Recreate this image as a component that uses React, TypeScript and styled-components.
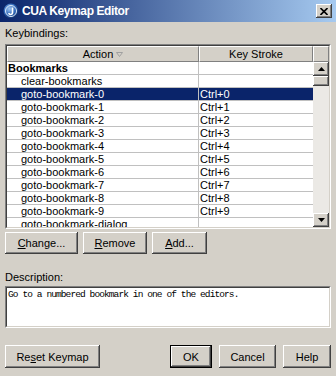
import styled, { createGlobalStyle, css } from 'styled-components';

const GlobalStyle = createGlobalStyle`
    html, body { margin: 0; padding: 0; background: #d4d0c8; }
    * { box-sizing: border-box; }
`;

const raised = css`
    background: #d4d0c8;
    box-shadow: inset -1px -1px #404040, inset 1px 1px #ffffff, inset -2px -2px #808080, inset 2px 2px #d4d0c8;
`;

const Window = styled.div`
    width: 336px;
    height: 376px;
    background: #d4d0c8;
    display: flex;
    flex-direction: column;
    overflow: hidden;
    font-family: "Liberation Sans", Arial, sans-serif;
    font-size: 11px;
    color: #000;
`;

const TitleBar = styled.div`
    height: 22px;
    flex-shrink: 0;
    display: flex;
    align-items: center;
    gap: 3px;
    padding-left: 3px;
    background: linear-gradient(to right, #0a246a, #a6caf0);
    color: #fff;
    font-weight: bold;
    font-size: 12px;
    letter-spacing: -0.4px;
`;

const CloseButton = styled.div`
    ${raised};
    margin-left: auto;
    margin-right: 4px;
    width: 16px;
    height: 14px;
    display: flex;
    align-items: center;
    justify-content: center;
`;

const Content = styled.div`
    display: flex;
    flex-direction: column;
    padding: 0 5px;
`;

const Label = styled.div<{ $mt: number }>`
    height: 16px;
    line-height: 16px;
    margin-top: ${p => p.$mt}px;
`;

const TableFrame = styled.div`
    margin-top: 3px;
    height: 185px;
    border: 1px solid;
    border-color: #808080 #ffffff #ffffff #808080;
`;

const TableInner = styled.div`
    height: 100%;
    border: 1px solid;
    border-color: #404040 #d4d0c8 #d4d0c8 #404040;
    display: grid;
    grid-template-columns: 1fr 16px;
    grid-template-rows: 16px 1fr;
    overflow: hidden;
`;

const Header = styled.div`
    display: grid;
    grid-template-columns: 192px 1fr;
`;

const HeaderCell = styled.div`
    background: #d4d0c8;
    border-top: 1px solid #fff;
    border-left: 1px solid #fff;
    border-right: 1px solid #808080;
    border-bottom: 1px solid #808080;
    display: flex;
    align-items: center;
    justify-content: center;
    gap: 3px;
    line-height: 14px;
`;

const Body = styled.div`
    background: #fff;
    overflow: hidden;
    min-height: 0;
`;

const Row = styled.div<{ $selected?: boolean }>`
    display: grid;
    grid-template-columns: 192px 1fr;
    height: 13px;
    background: ${p => (p.$selected ? '#0a246a' : '#fff')};
    color: ${p => (p.$selected ? '#fff' : '#000')};
`;

const Cell = styled.div<{ $indent: number; $bold?: boolean; $divider?: boolean }>`
    padding-left: ${p => p.$indent}px;
    line-height: 12px;
    white-space: nowrap;
    overflow: hidden;
    font-weight: ${p => (p.$bold ? 'bold' : 'normal')};
    border-bottom: 1px solid #c0c0c0;
    border-right: ${p => (p.$divider ? '1px solid #c0c0c0' : 'none')};
`;

const ScrollBar = styled.div`
    display: flex;
    flex-direction: column;
    background: #ebe9e5;
    min-height: 0;
`;

const ScrollButton = styled.div`
    ${raised};
    height: 14px;
    flex-shrink: 0;
    display: flex;
    align-items: center;
    justify-content: center;
`;

const Thumb = styled.div`
    ${raised};
    height: 10px;
    flex-shrink: 0;
`;

const Track = styled.div`
    flex: 1;
`;

const ButtonRow = styled.div<{ $mt: number; $h: number }>`
    display: flex;
    gap: 5px;
    margin-top: ${p => p.$mt}px;
    height: ${p => p.$h}px;
`;

const Spacer = styled.div`
    flex: 1;
`;

const Group = styled.div`
    display: flex;
    gap: 7px;
`;

const Button = styled.button<{ $w: number; $default?: boolean }>`
    ${raised};
    width: ${p => p.$w}px;
    height: 100%;
    padding: 0;
    border: ${p => (p.$default ? '1px solid #000' : 'none')};
    font-family: "Liberation Sans", Arial, sans-serif;
    font-size: 11px;
    color: #000;
    u { text-decoration-thickness: 1px; text-underline-offset: 1px; }
`;

const TextArea = styled.div`
    margin-top: 1px;
    height: 42px;
    border: 1px solid;
    border-color: #808080 #ffffff #ffffff #808080;
`;

const TextInner = styled.div`
    height: 100%;
    background: #fff;
    border: 1px solid;
    border-color: #404040 #d4d0c8 #d4d0c8 #404040;
    padding: 1px 1px;
    font-family: "Liberation Mono", "Courier New", monospace;
    font-size: 9.5px;
    letter-spacing: -0.9px;
    line-height: 12px;
    white-space: nowrap;
`;

type Binding = { name: string; key?: string; category?: boolean; selected?: boolean };

const bindings: Binding[] = [
    { name: 'Bookmarks', category: true },
    { name: 'clear-bookmarks' },
    ...Array.from({ length: 10 }, (_, i) => ({
        name: `goto-bookmark-${i}`,
        key: `Ctrl+${i}`,
        selected: i === 0
    })),
    { name: 'goto-bookmark-dialog' }
];

function AppIcon() {
    return <svg width="16" height="16" viewBox="0 0 16 16">
        <defs>
            <radialGradient id="ic" cx="40%" cy="35%" r="65%">
                <stop offset="0%" stopColor="#9ec4f0" />
                <stop offset="60%" stopColor="#2e66b8" />
                <stop offset="100%" stopColor="#12306e" />
            </radialGradient>
        </defs>
        <circle cx="8" cy="8" r="7.5" fill="url(#ic)" />
        <circle cx="8" cy="8" r="5.5" fill="none" stroke="#dbe8f8" strokeWidth="1" />
        <path d="M9.5 4.5 V9.5 Q9.5 11.5 7.5 11.5 Q6 11.5 5.8 10" fill="none" stroke="#fff" strokeWidth="1.6" />
    </svg>;
}

function Arrow({ down }: { down?: boolean }) {
    return <svg width="7" height="4" viewBox="0 0 7 4">
        <path d={down ? 'M0 0 H7 L3.5 4 Z' : 'M0 4 H7 L3.5 0 Z'} fill="#000" />
    </svg>;
}

export default function App() {
    return <>
        <GlobalStyle />
        <Window>
            <TitleBar>
                <AppIcon />
                <span>CUA Keymap Editor</span>
                <CloseButton>
                    <svg width="8" height="7" viewBox="0 0 8 7">
                        <path d="M0.5 0 L7.5 7 M7.5 0 L0.5 7" stroke="#000" strokeWidth="1.6" />
                    </svg>
                </CloseButton>
            </TitleBar>
            <Content>
                <Label $mt={3}>Keybindings:</Label>
                <TableFrame>
                    <TableInner>
                        <Header>
                            <HeaderCell>
                                Action
                                <svg width="7" height="5" viewBox="0 0 7 5">
                                    <path d="M0.5 0.5 H6.5 L3.5 4.5 Z" fill="none" stroke="#a0a0a0" strokeWidth="1" />
                                </svg>
                            </HeaderCell>
                            <HeaderCell>Key Stroke</HeaderCell>
                        </Header>
                        <HeaderCell />
                        <Body>
                            {bindings.map(b => (
                                <Row key={b.name} $selected={b.selected}>
                                    <Cell $indent={b.category ? 1 : 14} $bold={b.category} $divider>{b.name}</Cell>
                                    <Cell $indent={1}>{b.key}</Cell>
                                </Row>
                            ))}
                        </Body>
                        <ScrollBar>
                            <ScrollButton><Arrow /></ScrollButton>
                            <Thumb />
                            <Track />
                            <ScrollButton><Arrow down /></ScrollButton>
                        </ScrollBar>
                    </TableInner>
                </TableFrame>
                <ButtonRow $mt={3} $h={22}>
                    <Button $w={73}><u>C</u>hange...</Button>
                    <Button $w={64}><u>R</u>emove</Button>
                    <Button $w={55}><u>A</u>dd...</Button>
                </ButtonRow>
                <Label $mt={15}>Description:</Label>
                <TextArea>
                    <TextInner>Go to a numbered bookmark in one of the editors.</TextInner>
                </TextArea>
                <ButtonRow $mt={17} $h={23}>
                    <Button $w={95}>Re<u>s</u>et Keymap</Button>
                    <Spacer />
                    <Group>
                        <Button $w={42} $default>OK</Button>
                        <Button $w={57}>Cancel</Button>
                        <Button $w={48}>Help</Button>
                    </Group>
                </ButtonRow>
            </Content>
        </Window>
    </>;
}
